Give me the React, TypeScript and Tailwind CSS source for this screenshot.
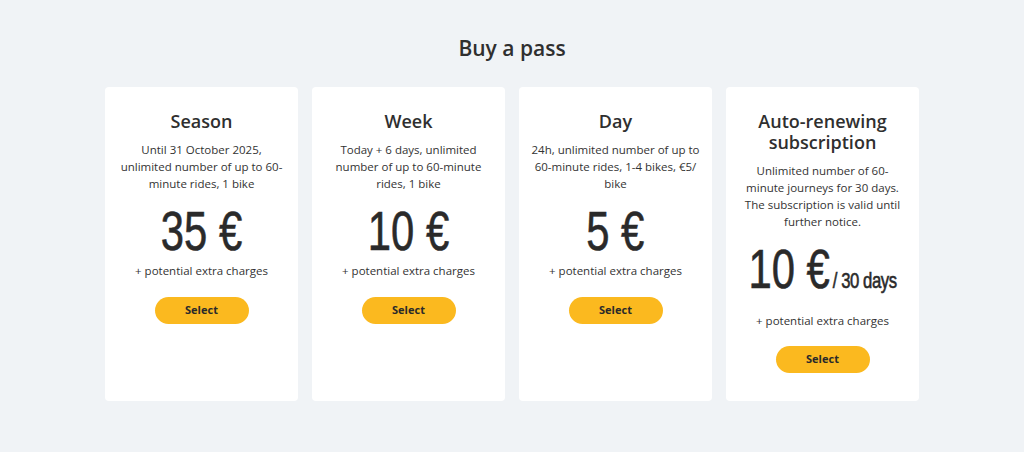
import React from "react";

type Pass = {
  title: string[];
  desc: React.ReactNode;
  price: string;
  per?: string;
  wide?: boolean;
};

const passes: Pass[] = [
  {
    title: ["Season"],
    desc: "Until 31 October 2025, unlimited number of up to 60-minute rides, 1 bike",
    price: "35 €",
  },
  {
    title: ["Week"],
    desc: "Today + 6 days, unlimited number of up to 60-minute rides, 1 bike",
    price: "10 €",
  },
  {
    title: ["Day"],
    desc: (
      <>
        24h, unlimited number of up to 60-minute rides, 1-4 bikes, €5/
        <wbr />
        bike
      </>
    ),
    price: "5 €",
    wide: true,
  },
  {
    title: ["Auto-renewing", "subscription"],
    desc: "Unlimited number of 60-minute journeys for 30 days. The subscription is valid until further notice.",
    price: "10 €",
    per: "/ 30 days",
  },
];

const sans = { fontFamily: '"Open Sans", "Liberation Sans", sans-serif' };
const narrow = { fontFamily: '"Liberation Sans", Arial, sans-serif' };

export default function App() {
  return (
    <div className="min-h-[452px] w-full bg-[#f0f3f6] text-[#2f2f2f]" style={sans}>
      <div className="mx-auto w-[814px] pt-[34px]">
        <h1 className="text-center text-[21px] font-semibold leading-[28px] text-[#2f2f2f]">
          Buy a pass
        </h1>
        <div className="mt-[25px] grid grid-cols-4 gap-[14px]">
          {passes.map((p, i) => (
            <div
              key={i}
              className="flex h-[314px] flex-col items-center rounded-[4px] bg-white px-[13px] pt-[24px] text-center"
            >
              <div className="text-[18px] font-semibold leading-[21px] text-[#2f2f2f]">
                {p.title.map((t) => (
                  <div key={t}>{t}</div>
                ))}
              </div>
              <p
                className={
                  (p.wide ? "-mx-[3px] " : "") +
                  "mt-[9px] text-[11.5px] leading-[17px] text-[#333]"
                }
              >
                {p.desc}
              </p>
              <div
                className="mt-[12px] flex h-[54px] w-full justify-center text-[55px] leading-[54px] text-[#2a2a2a] [-webkit-text-stroke:0.6px_#2a2a2a]"
                style={narrow}
              >
                <span className="inline-block scale-x-[0.76] whitespace-nowrap">
                  {p.price}
                  {p.per && (
                    <span className="ml-[4px] text-[22px] tracking-[-0.6px]">{p.per}</span>
                  )}
                </span>
              </div>
              <div
                className={
                  (p.per ? "mt-[16px]" : "mt-[4px]") +
                  " text-[11.5px] leading-[17px] text-[#333]"
                }
              >
                + potential extra charges
              </div>
              <button
                className={
                  (p.per ? "mt-[17px]" : "mt-[18px]") +
                  " h-[27px] w-[94px] rounded-full bg-[#fbb91f] text-[11px] font-bold text-[#2a2a2a]"
                }
              >
                Select
              </button>
            </div>
          ))}
        </div>
      </div>
    </div>
  );
}
